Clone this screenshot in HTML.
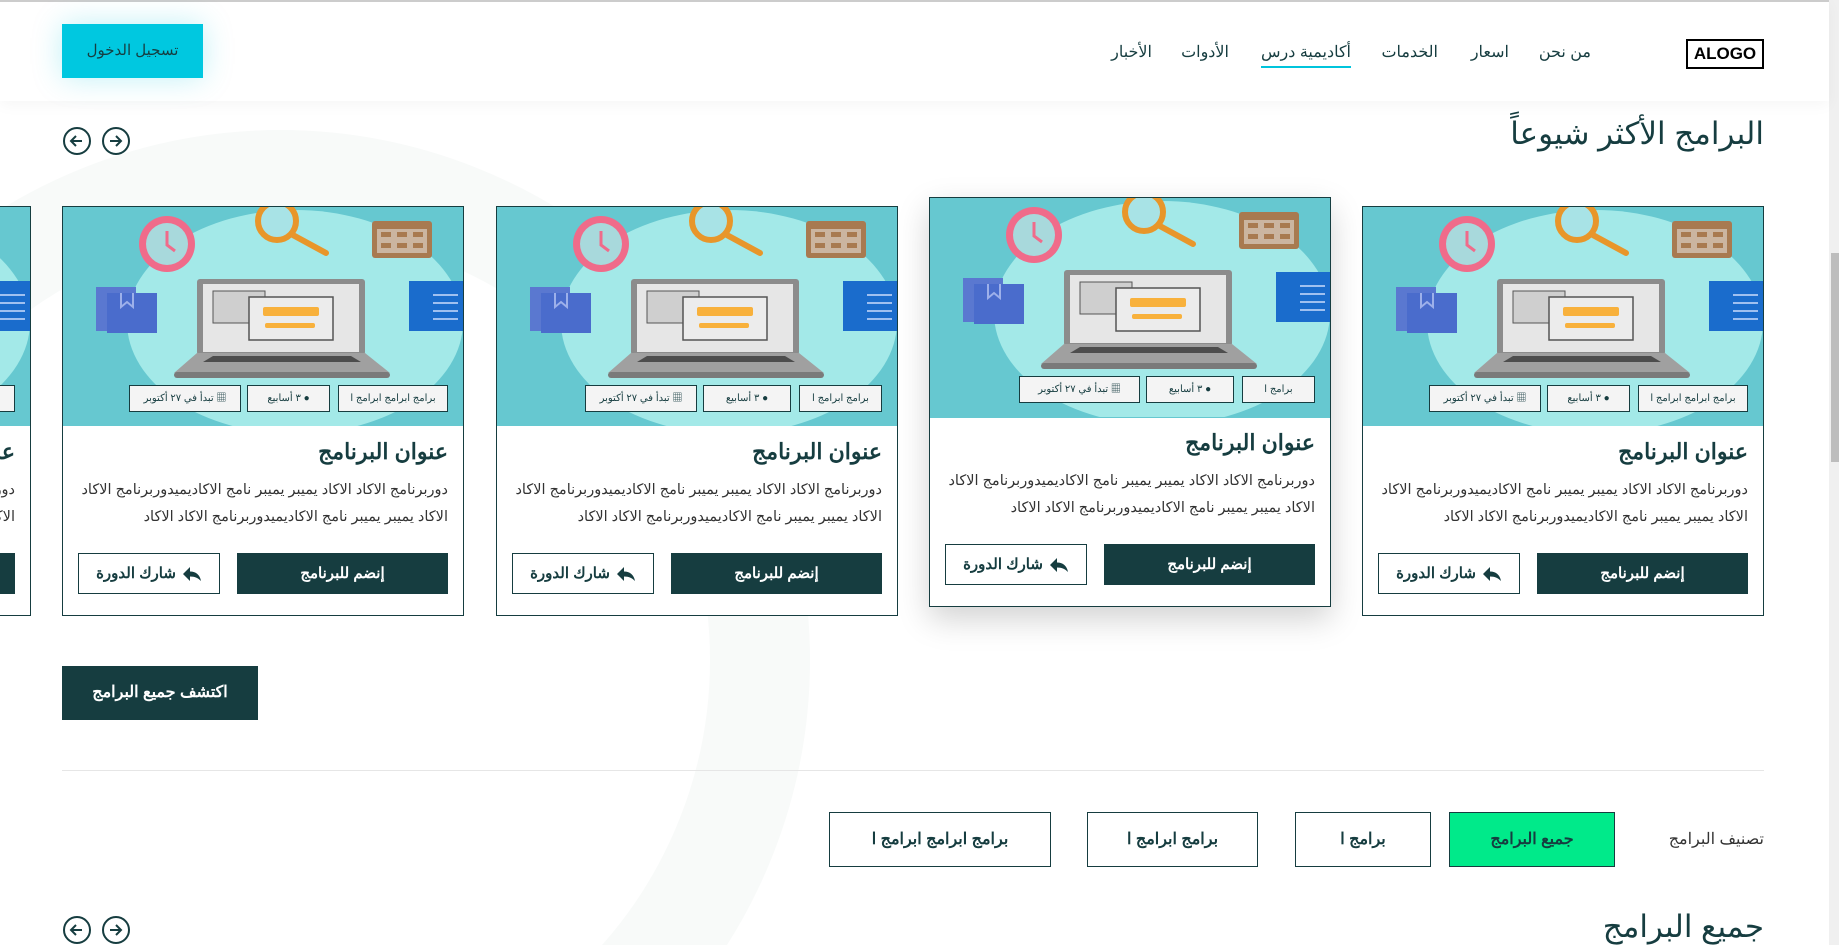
<!DOCTYPE html>
<html dir="rtl"><head><meta charset="utf-8"><style>
*{box-sizing:border-box;margin:0;padding:0}
html{width:1839px;height:945px;overflow:hidden}
body{width:1839px;height:945px;overflow:hidden;background:#fff;font-family:"Liberation Sans","Noto Sans CJK SC",sans-serif;color:#163d40;position:relative}
.clip{position:absolute;left:0;top:0;width:1839px;height:945px;overflow:hidden}
.abs{position:absolute}
.hdr{left:0;top:0;width:1829px;height:101px;background:#fff;border-top:2px solid #ccc;box-shadow:0 4px 14px rgba(0,0,0,.04);z-index:5}
.nav{top:40px;font-size:16px;color:#163d40;white-space:nowrap}
.card{width:402px;height:410px;background:#fff;border:1px solid #163d40;direction:rtl}
.card .img{position:absolute;left:0;top:0;width:400px;height:219px;background:#66c8d0;overflow:hidden}
.tag{position:absolute;top:178px;height:27px;background:#f4f4f4;border:1px solid #163d40;font-size:10px;line-height:25px;text-align:center;color:#163d40;white-space:nowrap}
.ttl{position:absolute;right:15px;top:232px;font-size:22px;font-weight:bold}
.desc{position:absolute;right:15px;top:270px;width:380px;font-size:14.5px;line-height:27px;color:#333}
.join{position:absolute;right:15px;top:346px;width:211px;height:41px;background:#163d40;color:#fff;font-size:15px;font-weight:bold;text-align:center;line-height:41px}
.share{position:absolute;right:243px;top:346px;width:142px;height:41px;border:1px solid #163d40;background:#fff;font-size:15px;font-weight:bold;text-align:center;line-height:39px}
.share svg{vertical-align:middle;margin-left:6px}
.circ{width:28px;height:28px;border:2px solid #163d40;border-radius:50%}
.fb{top:812px;height:55px;border:1px solid #163d40;font-size:16px;font-weight:bold;text-align:center;line-height:53px;background:#fff}
</style></head><body>
<svg width="0" height="0" style="position:absolute"><defs>
<symbol id="ill" viewBox="0 0 400 219">
<ellipse cx="232" cy="115" rx="168" ry="112" fill="#a3e9e8"/>
<circle cx="104" cy="37" r="28" fill="#f06b8a"/><circle cx="104" cy="37" r="21" fill="#a8d9dc"/>
<path d="M104 24v14l8 6" stroke="#f06b8a" stroke-width="3" fill="none"/>
<line x1="228" y1="27" x2="263" y2="46" stroke="#e8962a" stroke-width="6" stroke-linecap="round"/>
<circle cx="214" cy="14" r="19" fill="#a8e3e6" stroke="#e8962a" stroke-width="6"/>
<rect x="309" y="14" width="60" height="37" rx="3" fill="#a87a50"/><rect x="314" y="22" width="50" height="24" fill="#cbb5a0"/>
<g fill="#a87a50"><rect x="318" y="25" width="10" height="5"/><rect x="334" y="25" width="10" height="5"/><rect x="350" y="25" width="10" height="5"/><rect x="318" y="36" width="10" height="5"/><rect x="334" y="36" width="10" height="5"/><rect x="350" y="36" width="10" height="5"/></g>
<rect x="33" y="80" width="40" height="44" fill="#5a78d0"/><rect x="44" y="86" width="50" height="40" fill="#4a6ccc"/>
<path d="M58 86v14l6-5 6 5V86" stroke="#9db0ea" stroke-width="2" fill="none"/>
<rect x="346" y="74" width="60" height="50" fill="#1a6ccc"/>
<g stroke="#9fc0f0" stroke-width="2"><line x1="370" y1="88" x2="395" y2="88"/><line x1="370" y1="96" x2="395" y2="96"/><line x1="370" y1="104" x2="395" y2="104"/><line x1="370" y1="112" x2="395" y2="112"/></g>
<rect x="134" y="72" width="168" height="76" rx="3" fill="#8c8c8c"/><rect x="140" y="77" width="156" height="68" fill="#e6e6e6"/>
<rect x="150" y="84" width="52" height="32" fill="#cfcfcf" stroke="#555" stroke-width="1"/>
<rect x="186" y="90" width="84" height="43" fill="#ececec" stroke="#555" stroke-width="1.5"/>
<rect x="200" y="100" width="56" height="9" rx="2" fill="#f8b13c"/>
<rect x="202" y="116" width="50" height="5" rx="2" fill="#f8b13c"/>
<path d="M111 166 L134 146 H302 L327 166 Z" fill="#a0a0a0"/><rect x="111" y="165" width="216" height="6" rx="3" fill="#7a7a7a"/>
<path d="M140 155 L150 149 H288 L298 155 Z" fill="#4d4d4d"/>
</symbol>
<symbol id="shr" viewBox="0 0 20 16"><path d="M8 1 L1 8 L8 15 V10.5 C13 10.5 16 12 19 15 C18 9 14 5.5 8 5.5 Z" fill="#163d40"/></symbol>
</defs></svg>
<div class="clip">
<div class="abs" style="left:-250px;top:130px;width:1060px;height:1060px;border-radius:50%;border:100px solid #f8faf9"></div>

<div class="abs hdr">
<div class="abs" style="left:1686px;top:37px;width:78px;height:30px;border:2px solid #000;font-weight:bold;font-size:17px;text-align:center;line-height:26px;direction:ltr;color:#000">ALOGO</div>
<div class="abs nav" style="right:238px">من نحن</div>
<div class="abs nav" style="right:320px">اسعار</div>
<div class="abs nav" style="right:391px">الخدمات</div>
<div class="abs nav" style="right:478px">أكاديمية درس</div>
<div class="abs" style="right:478px;top:64px;width:90px;height:2px;background:#00c4dc"></div>
<div class="abs nav" style="right:600px">الأدوات</div>
<div class="abs nav" style="right:677px">الأخبار</div>
<div class="abs" style="left:62px;top:22px;width:141px;height:54px;background:#00c8e0;color:#163d40;font-size:15px;text-align:center;line-height:54px;box-shadow:0 0 30px rgba(0,200,224,.25)">تسجيل الدخول</div>
</div>
<div class="abs" style="right:75px;top:116px;font-size:31px;color:#163d40">البرامج الأكثر شيوعاً</div>
<div class="abs circ" style="left:63px;top:127px"><svg width="24" height="24" viewBox="0 0 24 24"><path d="M17 12H7M11 7l-5 5 5 5" stroke="#163d40" stroke-width="2" fill="none"/></svg></div>
<div class="abs circ" style="left:102px;top:127px"><svg width="24" height="24" viewBox="0 0 24 24"><path d="M6 12h10M12 7l5 5-5 5" stroke="#163d40" stroke-width="2" fill="none"/></svg></div>

<div class="abs card" style="left:1362px;top:206px"><div class="img"><svg width="400" height="219"><use href="#ill"/></svg></div><div class="tag" style="right:15px;width:110px">برامج ابرامج ابرامج ا</div><div class="tag" style="right:133px;width:83px">● ٣ أسابيع</div><div class="tag" style="right:222px;width:112px">▦ تبدأ في ٢٧ أكتوبر</div><div class="ttl">عنوان البرنامج</div><div class="desc">دوربرنامج الاكاد الاكاد يميبر يميبر نامج الاكاديميدوربرنامج الاكاد الاكاد يميبر يميبر نامج الاكاديميدوربرنامج الاكاد الاكاد</div><div class="join">إنضم للبرنامج</div><div class="share"><svg width="20" height="16"><use href="#shr"/></svg>شارك الدورة</div></div>
<div class="abs card" style="left:929px;top:197px;box-shadow:0 12px 30px rgba(0,0,0,.18)"><div class="img" style="height:220px"><svg width="400" height="219"><use href="#ill"/></svg></div><div class="tag" style="right:15px;width:73px">برامج ا</div><div class="tag" style="right:96px;width:88px">● ٣ أسابيع</div><div class="tag" style="right:190px;width:121px">▦ تبدأ في ٢٧ أكتوبر</div><div class="ttl">عنوان البرنامج</div><div class="desc">دوربرنامج الاكاد الاكاد يميبر يميبر نامج الاكاديميدوربرنامج الاكاد الاكاد يميبر يميبر نامج الاكاديميدوربرنامج الاكاد الاكاد</div><div class="join">إنضم للبرنامج</div><div class="share"><svg width="20" height="16"><use href="#shr"/></svg>شارك الدورة</div></div>
<div class="abs card" style="left:496px;top:206px"><div class="img"><svg width="400" height="219"><use href="#ill"/></svg></div><div class="tag" style="right:15px;width:83px">برامج ابرامج ا</div><div class="tag" style="right:106px;width:88px">● ٣ أسابيع</div><div class="tag" style="right:200px;width:112px">▦ تبدأ في ٢٧ أكتوبر</div><div class="ttl">عنوان البرنامج</div><div class="desc">دوربرنامج الاكاد الاكاد يميبر يميبر نامج الاكاديميدوربرنامج الاكاد الاكاد يميبر يميبر نامج الاكاديميدوربرنامج الاكاد الاكاد</div><div class="join">إنضم للبرنامج</div><div class="share"><svg width="20" height="16"><use href="#shr"/></svg>شارك الدورة</div></div>
<div class="abs card" style="left:62px;top:206px"><div class="img"><svg width="400" height="219"><use href="#ill"/></svg></div><div class="tag" style="right:15px;width:110px">برامج ابرامج ابرامج ا</div><div class="tag" style="right:133px;width:83px">● ٣ أسابيع</div><div class="tag" style="right:222px;width:112px">▦ تبدأ في ٢٧ أكتوبر</div><div class="ttl">عنوان البرنامج</div><div class="desc">دوربرنامج الاكاد الاكاد يميبر يميبر نامج الاكاديميدوربرنامج الاكاد الاكاد يميبر يميبر نامج الاكاديميدوربرنامج الاكاد الاكاد</div><div class="join">إنضم للبرنامج</div><div class="share"><svg width="20" height="16"><use href="#shr"/></svg>شارك الدورة</div></div>
<div class="abs card" style="left:-371px;top:206px"><div class="img"><svg width="400" height="219"><use href="#ill"/></svg></div><div class="tag" style="right:15px;width:110px">برامج ا</div><div class="ttl">عنوان البرنامج</div><div class="desc">دوربرنامج الاكاد الاكاد يميبر يميبر نامج الاكاديميدوربرنامج الاكاد الاكاد يميبر يميبر نامج الاكاديميدوربرنامج الاكاد الاكاد</div><div class="join">إنضم للبرنامج</div></div>

<div class="abs" style="left:62px;top:666px;width:196px;height:54px;background:#163d40;color:#fff;font-size:16px;font-weight:bold;text-align:center;line-height:54px">اكتشف جميع البرامج</div>
<div class="abs" style="left:62px;top:770px;width:1702px;height:1px;background:#e6e6e6"></div>
<div class="abs" style="right:75px;top:829px;font-size:16px;color:#333">تصنيف البرامج</div>
<div class="abs fb" style="left:1449px;width:166px;background:#00ea8a">جميع البرامج</div>
<div class="abs fb" style="left:1295px;width:136px">برامج ا</div>
<div class="abs fb" style="left:1087px;width:171px">برامج ابرامج ا</div>
<div class="abs fb" style="left:829px;width:222px">برامج ابرامج ابرامج ا</div>
<div class="abs" style="right:75px;top:908px;font-size:31px;line-height:37px">جميع البرامج</div>
<div class="abs circ" style="left:63px;top:916px"><svg width="24" height="24" viewBox="0 0 24 24"><path d="M17 12H7M11 7l-5 5 5 5" stroke="#163d40" stroke-width="2" fill="none"/></svg></div>
<div class="abs circ" style="left:102px;top:916px"><svg width="24" height="24" viewBox="0 0 24 24"><path d="M6 12h10M12 7l5 5-5 5" stroke="#163d40" stroke-width="2" fill="none"/></svg></div>
<div class="abs" style="left:1829px;top:0;width:10px;height:945px;background:#f0f0f0"></div>
<div class="abs" style="left:1831px;top:253px;width:8px;height:209px;background:#bdbdbd"></div>
</div>
</body></html>
